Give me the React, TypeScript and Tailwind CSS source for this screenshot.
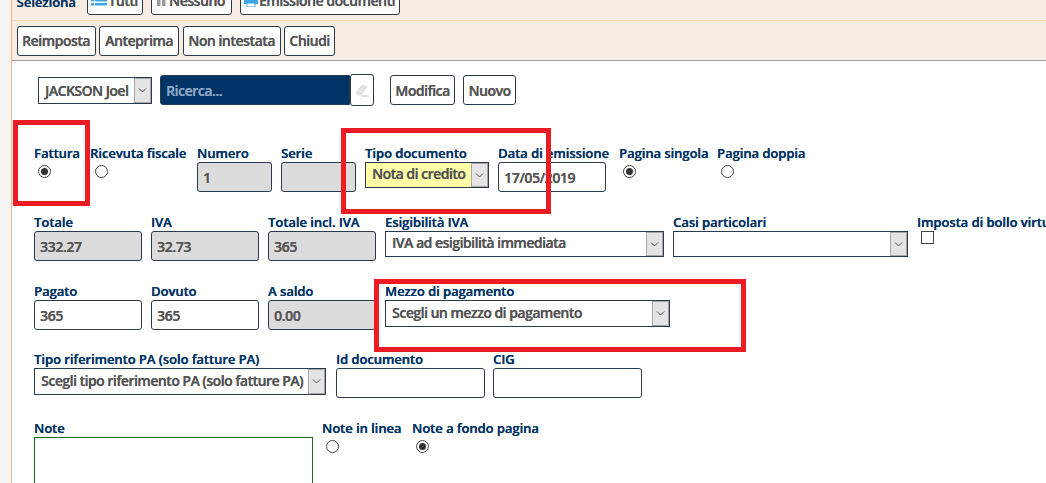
import type { ReactNode } from "react"

function Label({ children }: { children: ReactNode }) {
  return <div className="h-[18px] whitespace-nowrap text-[13px] leading-[18px] font-semibold tracking-[-0.05px] text-[#003366] [text-shadow:0.3px_0_0_#003366]">{children}</div>
}

function Btn({ children, className = "" }: { children: ReactNode; className?: string }) {
  return (
    <div className={`flex h-[30px] items-center justify-center rounded-[3px] border border-[#2b3a4a] bg-white text-[14px] font-semibold tracking-[-0.45px] whitespace-nowrap text-[#555] [text-shadow:0.3px_0_0_#555] ${className}`}>
      {children}
    </div>
  )
}

function TextBox({ value, disabled, className = "" }: { value?: string; disabled?: boolean; className?: string }) {
  return (
    <div className={`flex h-[30px] items-center rounded-[3px] border border-[#2b3a4a] px-[5px] text-[14px] font-semibold tracking-[-0.4px] text-[#555] [text-shadow:0.3px_0_0_#555] ${disabled ? "bg-[#dcdcdc]" : "bg-white"} ${className}`}>
      {value}
    </div>
  )
}

function Chevron() {
  return (
    <div className="flex h-full w-[17px] shrink-0 items-center justify-center border border-[#a8a8a8] bg-[#e4e4e4]">
      <svg width="9" height="5" viewBox="0 0 9 5" fill="none" stroke="#555" strokeWidth="1">
        <path d="M1 0.5 L4.5 4 L8 0.5" />
      </svg>
    </div>
  )
}

function Select({ value, className = "", yellow, textClass = "pb-[3px]" }: { value?: string; className?: string; yellow?: boolean; textClass?: string }) {
  return (
    <div className={`flex items-center border border-[#2b3a4a] ${yellow ? "bg-[#ffffa8]" : "bg-white"} ${className}`}>
      <div className={`min-w-0 flex-1 overflow-hidden pl-[6px] text-[14px] font-semibold tracking-[-0.5px] whitespace-nowrap text-[#555] [text-shadow:0.3px_0_0_#555] ${textClass}`}>{value}</div>
      <Chevron />
    </div>
  )
}

function Radio({ checked }: { checked?: boolean }) {
  return (
    <div className="flex h-[13px] w-[13px] items-center justify-center rounded-full border border-[#444] bg-white">
      {checked && <div className="h-[7px] w-[7px] rounded-full bg-[#333]" />}
    </div>
  )
}

function RadioField({ label, checked, width, inset }: { label: string; checked?: boolean; width: string; inset: string }) {
  return (
    <div className={width}>
      <Label>{label}</Label>
      <div className={`mt-[3px] ${inset}`}>
        <Radio checked={checked} />
      </div>
    </div>
  )
}

function Field({ label, width, children }: { label: string; width: string; children: ReactNode }) {
  return (
    <div className={`shrink-0 ${width}`}>
      <Label>{label}</Label>
      {children}
    </div>
  )
}

export default function App() {
  return (
    <div className="relative h-[483px] w-[1046px] overflow-hidden bg-[#f5f5f5] font-['Open_Sans',sans-serif]">
      <div className="ml-[11px] h-full border-l-[1.5px] border-[#f2b27c] bg-white">
        {/* top toolbars */}
        <div className="flex h-[21px] items-end gap-[8px] overflow-hidden border-b border-[#fbd9b5] bg-[#f7ede2] pb-[5px] pl-[4.5px]">
          <div className="mr-[2px] mb-[4px] w-[60px] text-[13px] leading-[18px] font-semibold text-[#003366] [text-shadow:0.3px_0_0_#003366]">Seleziona</div>
          <Btn className="w-[56px] gap-[1px]">
            <svg width="16" height="11" viewBox="0 0 16 11" fill="#3da5e8">
              <rect x="0" y="0" width="3" height="2.5" />
              <rect x="4" y="0" width="12" height="2.5" />
              <rect x="0" y="4" width="3" height="2.5" />
              <rect x="4" y="4" width="12" height="2.5" />
              <rect x="0" y="8" width="3" height="2.5" />
              <rect x="4" y="8" width="12" height="2.5" />
            </svg>
            Tutti
          </Btn>
          <Btn className="w-[81px] gap-[3px]">
            <svg width="9" height="12" viewBox="0 0 9 12" fill="#9a9a9a">
              <rect x="0" y="0" width="3.5" height="12" />
              <rect x="5" y="0" width="3.5" height="12" />
            </svg>
            Nessuno
          </Btn>
          <Btn className="w-[160px] gap-[1px]">
            <svg width="14" height="13" viewBox="0 0 14 13" fill="#3da5e8">
              <rect x="3" y="0" width="8" height="4" />
              <rect x="0" y="4" width="14" height="6" />
              <rect x="3" y="9" width="8" height="4" fill="#fff" stroke="#3da5e8" />
            </svg>
            Emissione documenti
          </Btn>
        </div>
        <div className="flex h-[40px] items-center gap-[3.5px] border-b border-[#9e9e9e] bg-[#f7ede2] pl-[4.5px]">
          <Btn className="w-[79px]">Reimposta</Btn>
          <Btn className="w-[80px]">Anteprima</Btn>
          <Btn className="w-[98px]">Non intestata</Btn>
          <Btn className="w-[51px]">Chiudi</Btn>
        </div>

        {/* customer search */}
        <div className="flex items-center pt-[13px] pl-[26px]">
          <Select value="JACKSON Joel" className="h-[27px] w-[114px]" textClass="pb-0" />
          <div className="ml-[8px] flex h-[30px] w-[190px] items-center rounded-l-[3px] border border-[#2b3a4a] bg-[#003366] pl-[5px] text-[14px] font-semibold tracking-[-0.45px] text-[#8ca6c4] [text-shadow:0.3px_0_0_#8ca6c4]">Ricerca...</div>
          <div className="flex h-[32px] w-[24px] items-center justify-center rounded-[3px] border border-[#2b3a4a] bg-white">
            <svg width="16" height="16" viewBox="0 0 16 16">
              <path d="M2 11 L8 3 L13 5 L7 13 H4 Z" fill="#e2e2e2" stroke="#d0d0d0" strokeWidth="0.5" />
              <path d="M7 14 H15" stroke="#c4c4c4" strokeWidth="1" />
            </svg>
          </div>
          <Btn className="ml-[16px] w-[65px]">Modifica</Btn>
          <Btn className="ml-[8px] w-[53px]">Nuovo</Btn>
        </div>

        {/* row 1 */}
        <div className="flex pt-[38px] pl-[22px]">
          <RadioField label="Fattura" checked width="w-[56px] shrink-0" inset="pl-[4px]" />
          <RadioField label="Ricevuta fiscale" width="w-[107px] shrink-0" inset="pl-[5px]" />
          <Field label="Numero" width="w-[84px]">
            <TextBox value="1" disabled className="w-[75px]" />
          </Field>
          <Field label="Serie" width="w-[84px]">
            <TextBox disabled className="w-[75px]" />
          </Field>
          <Field label="Tipo documento" width="w-[133px]">
            <Select value="Nota di credito" yellow className="h-[26px] w-[124px]" />
          </Field>
          <Field label="Data di emissione" width="w-[121px]">
            <TextBox value="17/05/2019" className="w-[108px]" />
          </Field>
          <RadioField label="Pagina singola" checked width="w-[98px] shrink-0" inset="pl-[4px]" />
          <RadioField label="Pagina doppia" width="w-[110px] shrink-0" inset="pl-[4px]" />
        </div>

        {/* row 2 */}
        <div className="flex pt-[21px] pl-[22px]">
          <Field label="Totale" width="w-[117px]">
            <TextBox value="332.27" disabled className="w-[108px]" />
          </Field>
          <Field label="IVA" width="w-[117px]">
            <TextBox value="32.73" disabled className="w-[108px]" />
          </Field>
          <Field label="Totale incl. IVA" width="w-[117px]">
            <TextBox value="365" disabled className="w-[108px]" />
          </Field>
          <Field label="Esigibilità IVA" width="w-[288px]">
            <Select value="IVA ad esigibilità immediata" className="h-[26px] w-[279px]" />
          </Field>
          <Field label="Casi particolari" width="w-[244px]">
            <Select className="h-[26px] w-[235px]" />
          </Field>
          <Field label="Imposta di bollo virtuale" width="w-[180px]">
            <div className="ml-[4px] h-[13px] w-[13px] border border-[#444] bg-white" />
          </Field>
        </div>

        {/* row 3 */}
        <div className="flex pt-[21px] pl-[22px]">
          <Field label="Pagato" width="w-[117px]">
            <TextBox value="365" className="w-[108px]" />
          </Field>
          <Field label="Dovuto" width="w-[117px]">
            <TextBox value="365" className="w-[108px]" />
          </Field>
          <Field label="A saldo" width="w-[117px]">
            <TextBox value="0.00" disabled className="w-[108px]" />
          </Field>
          <Field label="Mezzo di pagamento" width="w-[288px]">
            <Select value="Scegli un mezzo di pagamento" className="h-[27px] w-[285px]" />
          </Field>
        </div>

        {/* row 4 */}
        <div className="flex pt-[20px] pl-[22px]">
          <Field label="Tipo riferimento PA (solo fatture PA)" width="w-[302px]">
            <Select value="Scegli tipo riferimento PA (solo fatture PA)" className="h-[27px] w-[292px]" />
          </Field>
          <Field label="Id documento" width="w-[157px]">
            <TextBox className="w-[149px]" />
          </Field>
          <Field label="CIG" width="w-[150px]">
            <TextBox className="w-[149px]" />
          </Field>
        </div>

        {/* row 5 */}
        <div className="flex pt-[21px] pl-[22px]">
          <Field label="Note" width="w-[288px]">
            <div className="h-[60px] w-[279px] border border-[#1e6b1e] bg-white" />
          </Field>
          <RadioField label="Note in linea" width="w-[90px] shrink-0" inset="pl-[4px]" />
          <RadioField label="Note a fondo pagina" checked width="w-[140px] shrink-0" inset="pl-[4px]" />
        </div>
      </div>

      {/* red annotations drawn over the screenshot */}
      <div className="absolute top-[120px] left-[13px] h-[86px] w-[77px] border-[5px] border-[#ed1c24]" />
      <div className="absolute top-[128px] left-[341px] h-[86px] w-[210px] border-[5px] border-[#ed1c24]" />
      <div className="absolute top-[279px] left-[374px] h-[73px] w-[372px] border-[5px] border-[#ed1c24]" />
    </div>
  )
}
